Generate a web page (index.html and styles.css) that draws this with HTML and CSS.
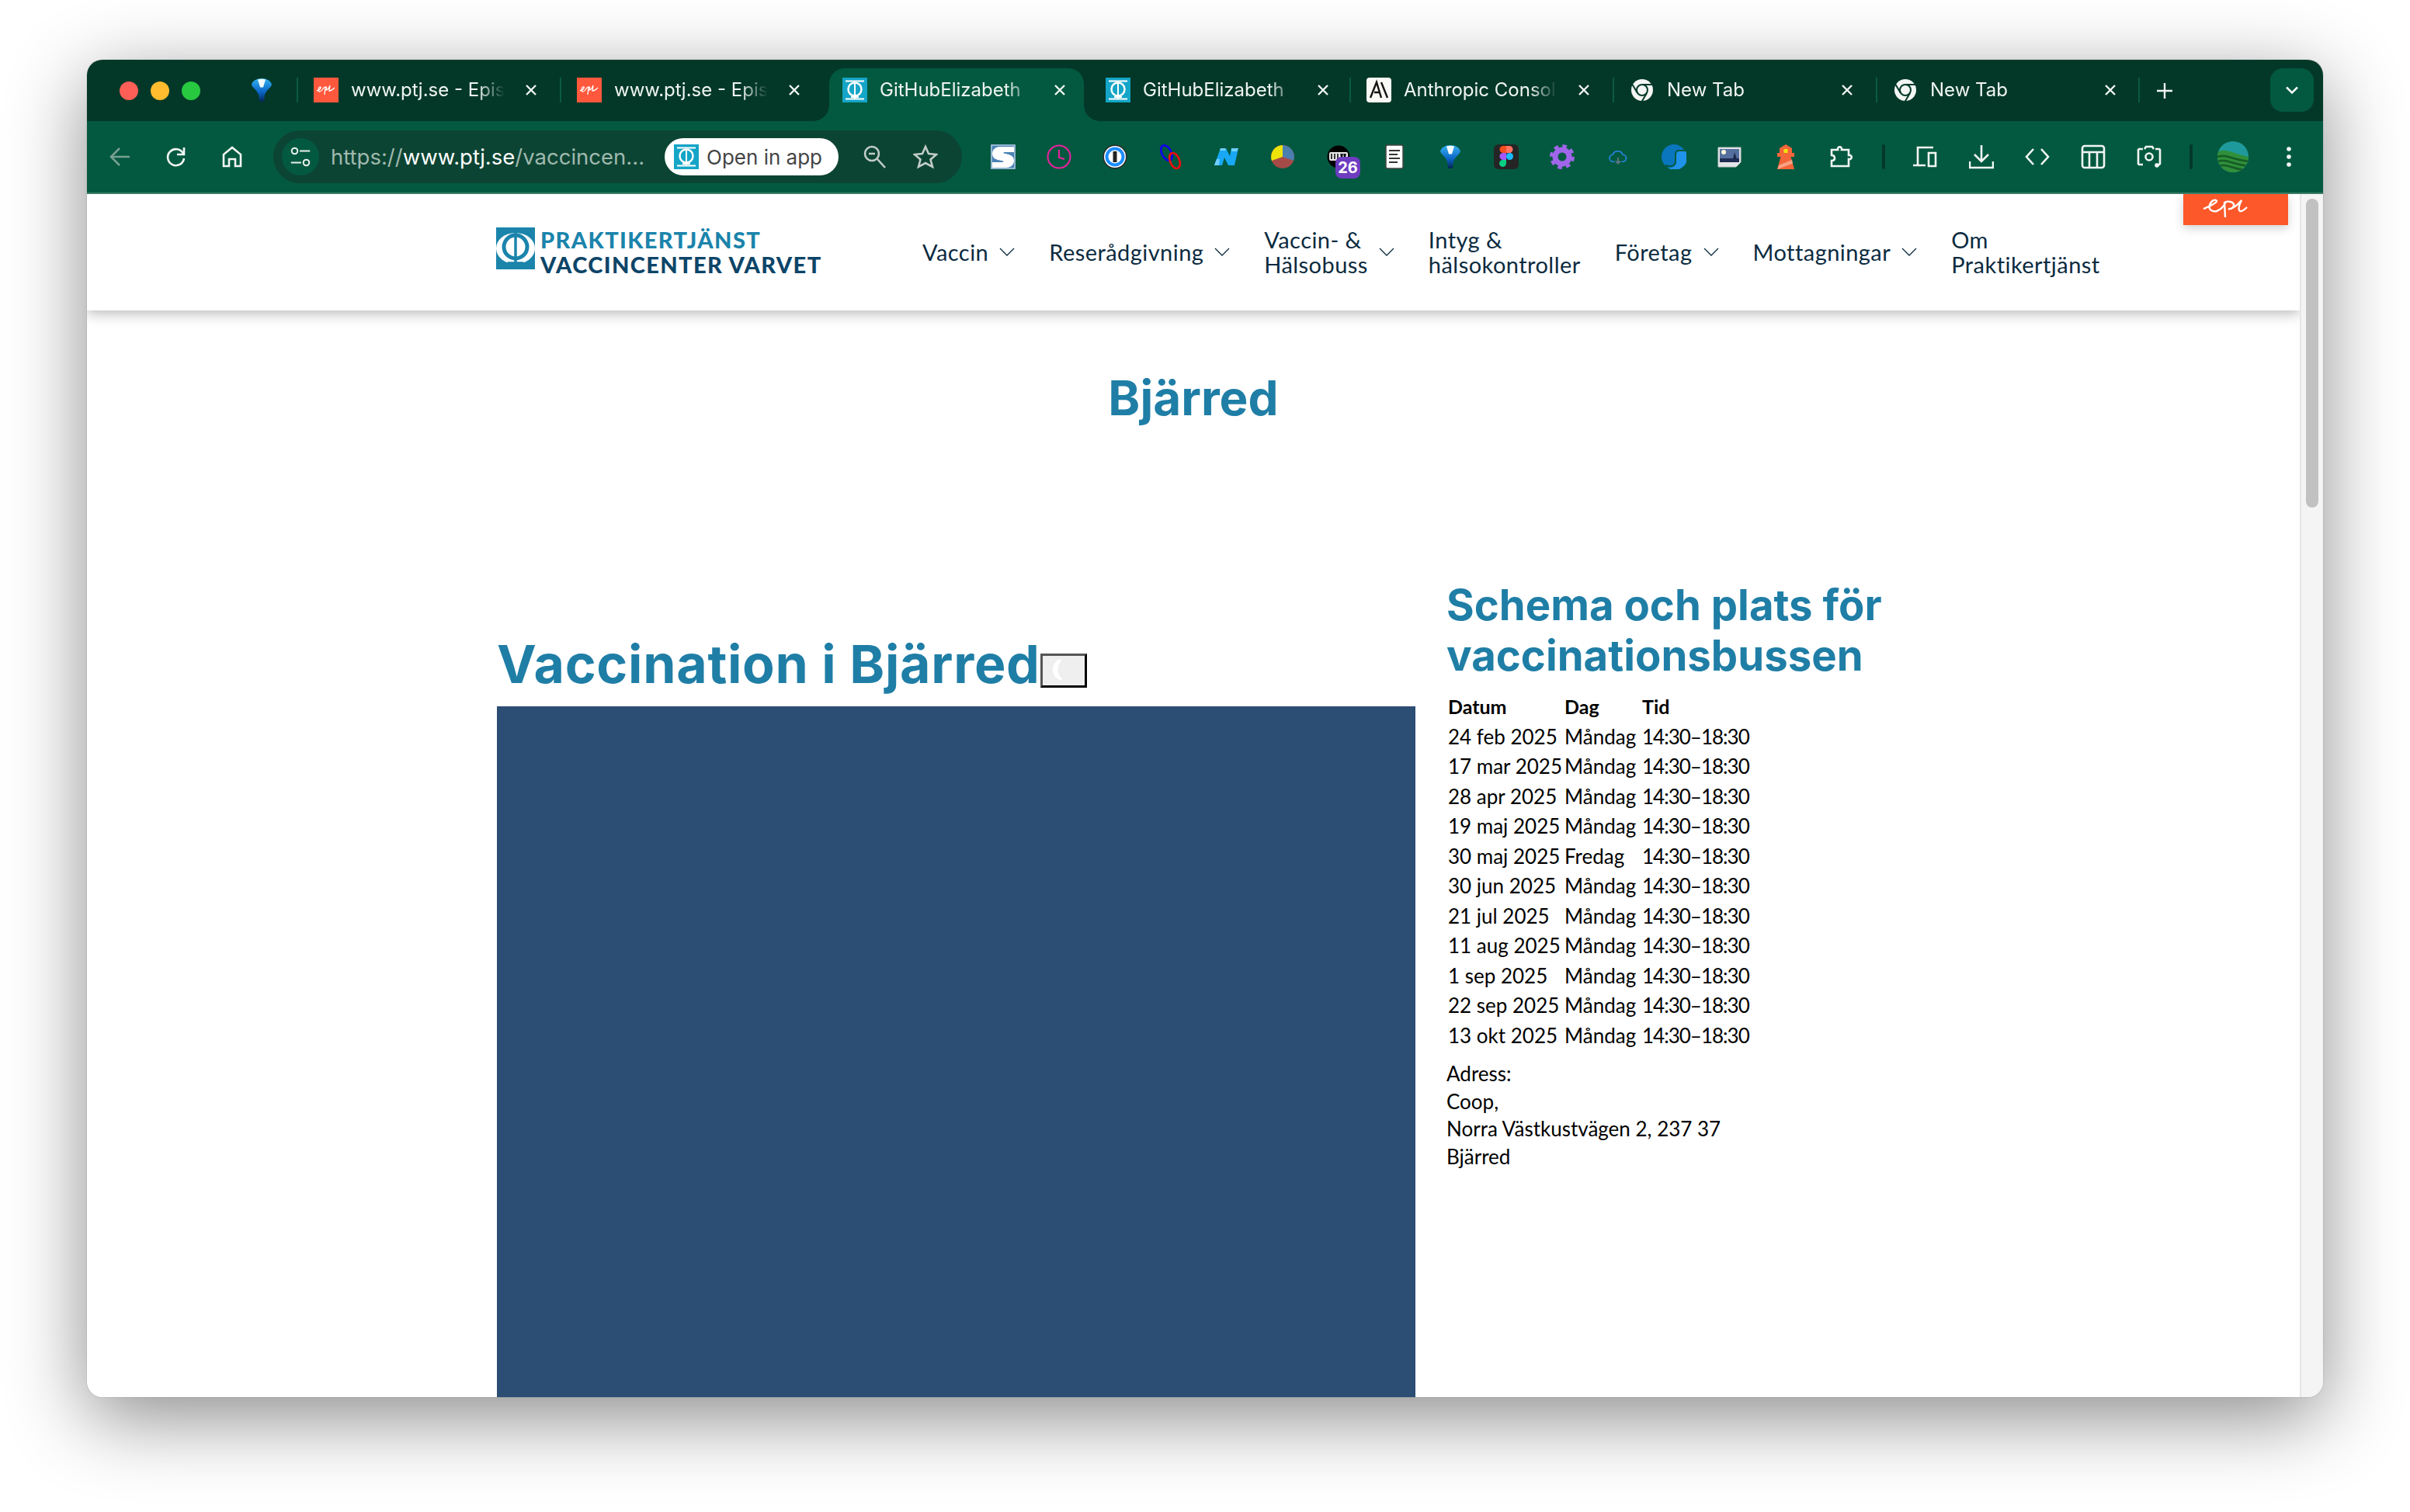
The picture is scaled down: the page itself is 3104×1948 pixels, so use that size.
FILE: index.html
```html
<!DOCTYPE html>
<html lang="sv">
<head>
    <meta charset="UTF-8">
    <title>Bjärred</title>
    <link rel="stylesheet" href="styles.css">
</head>
<body>
    <svg class="defs" width="0" height="0">
        <symbol id="fav-epi" viewBox="0 0 32 32">
            <rect width="32" height="32" fill="#ff583d"/>
            <path d="M4 17c4-1 6-4 5-5-2-1-4 4-2 6 2 1 4-2 6-5l2-1-1 10 1-10c2-1 2 2 1 4 2 0 4-3 5-6l-1 7c2 0 5-2 7-4" fill="none" stroke="#fff" stroke-width="1.3"/>
        </symbol>
        <symbol id="fav-ptj" viewBox="0 0 32 32">
            <rect width="32" height="32" fill="#14a5c7"/>
            <path d="M4 4.500h24M4 27.500h24M16 6v21M11 25h10" stroke="#fff" stroke-width="2" fill="none"/>
            <circle cx="16" cy="15" r="8.500" fill="none" stroke="#fff" stroke-width="2.500"/>
        </symbol>
        <symbol id="fav-chrome" viewBox="0 0 32 32">
            <circle cx="16" cy="16" r="14" fill="#f4f6f4"/>
            <circle cx="16" cy="16" r="7" fill="none" stroke="#033a2a" stroke-width="2"/>
            <path d="M16 9h13M10 20L3.500 9M22 20l-6.500 11" stroke="#033a2a" stroke-width="2" fill="none"/>
        </symbol>
        <symbol id="ic-funnel" viewBox="0 0 32 32">
            <defs>
                <linearGradient id="funnel-grad" x1="0" y1="0" x2="0" y2="1">
                    <stop offset="0" stop-color="#35b4f2"/>
                    <stop offset="0.6" stop-color="#0a62c4"/>
                    <stop offset="1" stop-color="#04264f"/>
                </linearGradient>
            </defs>
            <path d="M3 9C4 4 10 1 16 1s12 3 13 8c-1 4-7 7-9 13l-1 9h-6l-1-9C10 16 4 13 3 9z" fill="url(#funnel-grad)"/>
            <path d="M11 2.500c3-1 7-1 10 0l-3 10h-4z" fill="#f2fbff"/>
        </symbol>
        <symbol id="ic-close" viewBox="0 0 24 24">
            <path d="M6 6l12 12M18 6L6 18" stroke="#f2f6f3" stroke-width="2.400" fill="none"/>
        </symbol>
    </svg>

    <div class="window">
        <div class="tabstrip">
            <div class="lights">
                <span class="light light-red"></span>
                <span class="light light-yellow"></span>
                <span class="light light-green"></span>
            </div>
            <div class="pinned"><svg class="fav"><use href="#ic-funnel"/></svg></div>

            <div class="tab">
                <svg class="fav"><use href="#fav-epi"/></svg>
                <span class="tab-title">www.ptj.se - Epis</span>
                <svg class="tab-close"><use href="#ic-close"/></svg>
            </div>
            <div class="tab">
                <svg class="fav"><use href="#fav-epi"/></svg>
                <span class="tab-title">www.ptj.se - Epis</span>
                <svg class="tab-close"><use href="#ic-close"/></svg>
            </div>
            <div class="tab tab-active">
                <svg class="fav"><use href="#fav-ptj"/></svg>
                <span class="tab-title">GitHubElizabeth</span>
                <svg class="tab-close"><use href="#ic-close"/></svg>
            </div>
            <div class="tab tab-after-active">
                <svg class="fav"><use href="#fav-ptj"/></svg>
                <span class="tab-title">GitHubElizabeth</span>
                <svg class="tab-close"><use href="#ic-close"/></svg>
            </div>
            <div class="tab">
                <svg class="fav" viewBox="0 0 32 32">
                    <rect x="0" width="32" height="32" rx="4" fill="#faf9f5"/>
                    <path d="M5 26L13 6l6 20M10 19h7M19 6l8 20" stroke="#141413" stroke-width="2.400" fill="none"/>
                </svg>
                <span class="tab-title">Anthropic Consol</span>
                <svg class="tab-close"><use href="#ic-close"/></svg>
            </div>
            <div class="tab">
                <svg class="fav"><use href="#fav-chrome"/></svg>
                <span class="tab-title">New Tab</span>
                <svg class="tab-close"><use href="#ic-close"/></svg>
            </div>
            <div class="tab tab-last">
                <svg class="fav"><use href="#fav-chrome"/></svg>
                <span class="tab-title">New Tab</span>
                <svg class="tab-close"><use href="#ic-close"/></svg>
            </div>
            <svg class="new-tab" viewBox="0 0 24 24"><path d="M12 2v20M2 12h20" stroke="#f2f6f3" stroke-width="2.400"/></svg>
            <div class="tab-search">
                <svg viewBox="0 0 24 24" width="28" height="28"><path d="M6 9l6 6 6-6" fill="none" stroke="#f2f6f3" stroke-width="2.200"/></svg>
            </div>
        </div>

        <div class="toolbar">
            <div class="slot">
                <svg class="tool dim" viewBox="0 0 32 32"><path d="M28 16H5M15 5L4 16l11 11" fill="none"/></svg>
            </div>
            <div class="slot">
                <svg class="tool" viewBox="0 0 32 32"><path d="M25 12a10.500 10.500 0 1 0 1 6M26 4v9h-9" fill="none"/></svg>
            </div>
            <div class="slot">
                <svg class="tool" viewBox="0 0 32 32"><path d="M5 28V13L16 4l11 9v15h-7v-9h-8v9z" fill="none"/></svg>
            </div>

            <div class="omnibox">
                <div class="site-info">
                    <svg viewBox="0 0 32 32" width="30" height="30"><g fill="none" stroke="#e9f0ec" stroke-width="2.200"><circle cx="8" cy="8" r="4"/><path d="M15 8h14M3 24h14"/><circle cx="24" cy="24" r="4"/></g></svg>
                </div>
                <div class="url"><span class="url-dim">https://</span>www.ptj.se<span class="url-dim">/vaccincen...</span></div>
                <div class="open-app">
                    <svg class="fav"><use href="#fav-ptj"/></svg>
                    <span>Open in app</span>
                </div>
                <svg class="omni-icon omni-zoom" viewBox="0 0 32 32"><g fill="none" stroke="#c2cdc8" stroke-width="2.600"><circle cx="12" cy="12" r="9"/><path d="M8 12h8M19 19l10 11"/></g></svg>
                <svg class="omni-icon omni-star" viewBox="0 0 32 32"><path d="M16 3l4 9 10 1-7.500 6.500L25 29l-9-5-9 5 2.500-9.500L2 13l10-1z" fill="none" stroke="#c2cdc8" stroke-width="2.600"/></svg>
            </div>

            <div class="extensions">
                <div class="slot"><svg class="ext" viewBox="0 0 32 32">
                    <rect width="32" height="32" fill="#4a83b6"/>
                    <rect x="1" y="1" width="30" height="30" fill="none" stroke="#dfe9f0"/>
                    <path d="M30 3H12C6 3 2 7 2 12c0 6 5 8 12 9 4 .5 3 2 0 2H2v7h18c6 0 10-4 10-9 0-6-5-8-11-9-4-.5-3-2 0-2h11z" fill="#fff"/>
                </svg></div>
                <div class="slot"><svg class="ext" viewBox="0 0 32 32"><circle cx="16" cy="16" r="14.500" fill="none" stroke="#ee1f9f" stroke-width="2"/><path d="M16 7v10l7 2" fill="none" stroke="#ee1f9f" stroke-width="2"/></svg></div>
                <div class="slot"><svg class="ext" viewBox="0 0 32 32"><circle cx="16" cy="16" r="15.500" fill="#2a2a2a"/><circle cx="16" cy="16" r="14" fill="#fff"/><circle cx="16" cy="16" r="12.500" fill="#1a8cff"/><circle cx="16" cy="16" r="8.500" fill="#fff"/><rect x="13.500" y="9" width="5" height="14" fill="#222"/></svg></div>
                <div class="slot"><svg class="ext" viewBox="0 0 32 32"><ellipse cx="10.500" cy="11" rx="6" ry="10.500" transform="rotate(-28 10.500 11)" fill="none" stroke="#1400ef" stroke-width="2.600"/><ellipse cx="21" cy="21" rx="6" ry="10.500" transform="rotate(-22 21 21)" fill="none" stroke="#f00d0d" stroke-width="2.600"/></svg></div>
                <div class="slot"><svg class="ext" viewBox="0 0 32 32"><path d="M0 27L8 5l7 0 5 10 2-10h9l-5 22h-8l-5-10-3 10z" fill="#18a8f5"/><path d="M8 5h6l1 3H7zM22 5h9l-2 4h-7zM0 27l3-8h4l-1 8z" fill="#6fd0ff"/></svg></div>
                <div class="slot"><svg class="ext" viewBox="0 0 32 32"><circle cx="16" cy="16" r="15" fill="#a64a47"/><path d="M16 16L2 21A15 15 0 0 1 16 1z" fill="#ebe30a"/><path d="M16 16V1a15 15 0 0 1 14 20z" fill="#4a7fb0"/></svg></div>
                <div class="slot ext-dev">
                    <svg class="ext" viewBox="0 0 32 32"><circle cx="16" cy="16" r="14.500" fill="#000"/><rect x="4" y="10" width="24" height="11" rx="2" fill="#e8e8e8"/><path d="M7 12v7M11 12v7M15 12v7M19 12l1 7 1-7M23 12l1 7 1-7" stroke="#000" stroke-width="1.500"/></svg>
                    <span class="badge">26</span>
                </div>
                <div class="slot"><svg class="ext" viewBox="0 0 32 32"><rect x="5" y="1" width="22" height="30" rx="2" fill="#fff" stroke="#444" stroke-width="1.500"/><path d="M9 8h14M9 13h11M9 18h14M9 23h11" stroke="#333" stroke-width="2"/></svg></div>
                <div class="slot"><svg class="ext"><use href="#ic-funnel"/></svg></div>
                <div class="slot"><svg class="ext" viewBox="0 0 32 32"><rect width="32" height="32" rx="6" fill="#252525"/><path d="M16 2h-4a4.500 4.500 0 0 0 0 9h4z" fill="#f24e1e"/><path d="M16 2h4a4.500 4.500 0 0 1 0 9h-4z" fill="#ff7262"/><path d="M16 11h-4a4.500 4.500 0 0 0 0 9h4z" fill="#a259ff"/><circle cx="20.500" cy="15.500" r="4.500" fill="#1abcfe"/><path d="M16 20h-4a4.500 4.500 0 1 0 4 4.500z" fill="#0acf83"/></svg></div>
                <div class="slot"><svg class="ext" viewBox="0 0 32 32"><circle cx="16" cy="16" r="9" fill="none" stroke="#a066ea" stroke-width="7"/><circle cx="16" cy="16" r="13" fill="none" stroke="#a066ea" stroke-width="6" stroke-dasharray="5.200 5"/></svg></div>
                <div class="slot"><svg class="ext" viewBox="0 0 32 32"><g transform="translate(4 5) scale(.75)"><path d="M10 23H8a6 6 0 0 1-1-12 9 9 0 0 1 17 0 6 6 0 0 1 0 12h-2" fill="none" stroke="#2a86e8" stroke-width="2.200"/><path d="M16 16v10M12 22l4 4 4-4" fill="none" stroke="#5d7480" stroke-width="2.600"/></g></svg></div>
                <div class="slot"><svg class="ext" viewBox="0 0 32 32"><circle cx="16" cy="16" r="16" fill="#0a76bd"/><path d="M22 8h8.500A16 16 0 0 1 8 30c6 1 10-2 10-8v-8c0-4 1-6 4-6z" fill="#1f92ea"/><path d="M31 8h-9c-3 0-4 2-4 6v8c0 5-4 8-13 5" fill="none" stroke="#03593f" stroke-width="2"/></svg></div>
                <div class="slot"><svg class="ext" viewBox="0 0 32 32"><path d="M1 4h29v19l-6 6H1z" fill="#e4e6e8" stroke="#c9cdd0"/><rect x="3" y="6" width="25" height="17" fill="#55709f"/><rect x="3" y="18" width="25" height="5" fill="#1f2d52"/><circle cx="8" cy="10" r="3" fill="#f8f8dc"/><path d="M20 19l2-9 3 9z" fill="#1a2748"/></svg></div>
                <div class="slot"><svg class="ext" viewBox="0 0 32 32"><path d="M16 0L8 5v6h16V5z" fill="#f4663a"/><rect x="13.500" y="6" width="5" height="5" fill="#f2e20c"/><rect x="5" y="11" width="22" height="5" fill="#f4663a"/><path d="M9.500 16h13L27 32H5z" fill="#f4663a"/><path d="M7 27l17-7 1 4.500L5.500 32z" fill="#f9a184"/></svg></div>
                <div class="slot"><svg class="tool" viewBox="0 0 32 32"><path d="M3 7h8c-1-5 6-5 5 0h9v7c5-1 5 6 0 5v9H3v-7c3 0 4-1 4-3s-1-4-4-4z" fill="none"/></svg></div>
            </div>

            <span class="tool-sep"></span>
            <div class="slot"><svg class="tool" viewBox="0 0 32 32"><path d="M26 4H6v22M0 27h16M20 11h9v17h-9z" fill="none"/></svg></div>
            <div class="slot"><svg class="tool" viewBox="0 0 32 32"><path d="M16 1v20M7 13l9 9 9-9M1 22v8h30v-8" fill="none"/></svg></div>
            <div class="slot"><svg class="tool" viewBox="0 0 32 32"><path d="M11 6L2 16l9 10M21 6l9 10-9 10" fill="none"/></svg></div>
            <div class="slot"><svg class="tool" viewBox="0 0 32 32"><rect x="2" y="2" width="28" height="28" rx="3" fill="none"/><path d="M2 10h28M11 10v20M21 10v20" fill="none"/></svg></div>
            <div class="slot"><svg class="tool" viewBox="0 0 32 32"><path d="M8 6H3l-1 1v18l1 1h5M24 6h5l1 1v18l-1 1h-5M10 6l2-3h8l2 3" fill="none"/><circle cx="16" cy="16" r="4.500" fill="none"/><circle cx="26" cy="27" r="1.500" fill="#f2f6f3"/></svg></div>
            <span class="tool-sep"></span>
            <div class="slot">
                <svg class="avatar" viewBox="0 0 40 40">
                    <defs><clipPath id="avatar-clip"><circle cx="20" cy="20" r="20"/></clipPath></defs>
                    <g clip-path="url(#avatar-clip)">
                        <rect width="40" height="40" fill="#1f9a9c"/>
                        <path d="M0 14c10-6 20 2 40 6v20H0z" fill="#2f8f3a"/>
                        <path d="M0 20c10-4 20 4 40 6M0 26c10-4 20 4 40 6M0 32c10-4 20 4 40 6" fill="none" stroke="#155c25" stroke-width="2.500"/>
                    </g>
                </svg>
            </div>
            <div class="slot">
                <svg class="dots" viewBox="0 0 8 32" width="8" height="32"><circle cx="4" cy="6" r="2.800" fill="#f2f6f3"/><circle cx="4" cy="16" r="2.800" fill="#f2f6f3"/><circle cx="4" cy="26" r="2.800" fill="#f2f6f3"/></svg>
            </div>
        </div>

        <div class="viewport">
            <div class="page">
                <header class="site-header">
                    <a class="logo">
                        <svg class="logo-mark" viewBox="0 0 50 54">
                            <rect width="50" height="54" fill="#1b84ab"/>
                            <ellipse cx="25" cy="27" rx="25" ry="20" fill="#fff"/>
                            <circle cx="25" cy="25" r="15" fill="none" stroke="#1b84ab" stroke-width="5"/>
                            <path d="M25 6v41M15 46h20" stroke="#1b84ab" stroke-width="3.500"/>
                        </svg>
                        <div class="logo-text">
                            <span class="logo-top">PRAKTIKERTJÄNST</span>
                            <span class="logo-bottom">VACCINCENTER VARVET</span>
                        </div>
                    </a>
                    <nav class="main-nav">
                        <a class="nav-item">Vaccin<svg class="chev" viewBox="0 0 20 12"><path d="M1 1l9 9 9-9" fill="none" stroke="#0b2b3f" stroke-width="1.300"/></svg></a>
                        <a class="nav-item">Reserådgivning<svg class="chev" viewBox="0 0 20 12"><path d="M1 1l9 9 9-9" fill="none" stroke="#0b2b3f" stroke-width="1.300"/></svg></a>
                        <a class="nav-item"><span>Vaccin- &amp;<br>Hälsobuss</span><svg class="chev" viewBox="0 0 20 12"><path d="M1 1l9 9 9-9" fill="none" stroke="#0b2b3f" stroke-width="1.300"/></svg></a>
                        <a class="nav-item"><span>Intyg &amp;<br>hälsokontroller</span></a>
                        <a class="nav-item">Företag<svg class="chev" viewBox="0 0 20 12"><path d="M1 1l9 9 9-9" fill="none" stroke="#0b2b3f" stroke-width="1.300"/></svg></a>
                        <a class="nav-item">Mottagningar<svg class="chev" viewBox="0 0 20 12"><path d="M1 1l9 9 9-9" fill="none" stroke="#0b2b3f" stroke-width="1.300"/></svg></a>
                        <a class="nav-item"><span>Om<br>Praktikertjänst</span></a>
                    </nav>
                </header>

                <h1 class="page-title">Bjärred</h1>

                <div class="columns">
                    <section class="col-main">
                        <h2 class="main-title">Vaccination i Bjärred<span class="broken-btn"><svg viewBox="0 0 54 38" width="54" height="38"><path d="M22 4c-11 4-13 22 0 27 4 0 3-2 2-2-6-6-6-17 0-23z" fill="#fff"/></svg></span></h2>
                        <div class="map-box"></div>
                    </section>
                    <aside class="col-side">
                        <h2 class="side-title">Schema och plats för vaccinationsbussen</h2>
                        <table class="schedule">
                            <thead>
                                <tr><th>Datum</th><th>Dag</th><th>Tid</th></tr>
                            </thead>
                            <tbody>
                                <tr><td>24 feb 2025</td><td>Måndag</td><td>14:30–18:30</td></tr>
                                <tr><td>17 mar 2025</td><td>Måndag</td><td>14:30–18:30</td></tr>
                                <tr><td>28 apr 2025</td><td>Måndag</td><td>14:30–18:30</td></tr>
                                <tr><td>19 maj 2025</td><td>Måndag</td><td>14:30–18:30</td></tr>
                                <tr><td>30 maj 2025</td><td>Fredag</td><td>14:30–18:30</td></tr>
                                <tr><td>30 jun 2025</td><td>Måndag</td><td>14:30–18:30</td></tr>
                                <tr><td>21 jul 2025</td><td>Måndag</td><td>14:30–18:30</td></tr>
                                <tr><td>11 aug 2025</td><td>Måndag</td><td>14:30–18:30</td></tr>
                                <tr><td>1 sep 2025</td><td>Måndag</td><td>14:30–18:30</td></tr>
                                <tr><td>22 sep 2025</td><td>Måndag</td><td>14:30–18:30</td></tr>
                                <tr><td>13 okt 2025</td><td>Måndag</td><td>14:30–18:30</td></tr>
                            </tbody>
                        </table>
                        <p class="address">Adress:<br>Coop,<br>Norra Västkustvägen 2, 237 37<br>Bjärred</p>
                    </aside>
                </div>

                <div class="epi-tab">
                    <svg viewBox="0 0 60 30" width="60" height="30"><path d="M1 13C8 10 18 6 18 3 17 0 11 2 9 8 7 14 12 17 18 16 24 14 28 8 30 4M29 24L28 5C30 3 38 3 40 7 41 11 36 14 33 13 38 14 44 9 50 2 47 8 45 14 48 16 51 17 54 14 57 11" fill="none" stroke="#fff" stroke-width="2.400"/></svg>
                </div>
            </div>
            <div class="scrollbar"><div class="thumb"></div></div>
        </div>
    </div>
</body>
</html>
```

FILE: styles.css
```css
html, body {
    margin: 0;
    height: 100%;
    background: #fff;
    overflow: hidden;
}
body {
    padding: 77px 112px 0;
    box-sizing: border-box;
    height: 1948px;
    font-family: "Lato", "Liberation Sans", sans-serif;
}
.defs {
    position: absolute;
}
.window {
    width: 2880px;
    height: 1723px;
    border-radius: 20px;
    box-shadow: 0 26px 100px rgba(0, 0, 0, 0.46), 0 0 1px rgba(0, 0, 0, 0.6);
    display: flex;
    flex-direction: column;
}

/* tab strip */
.tabstrip {
    display: flex;
    align-items: flex-end;
    height: 79px;
    background: #033828;
    border-radius: 20px 20px 0 0;
    font-family: "Inter", sans-serif;
    font-size: 24px;
    color: #f0f5f2;
    flex: none;
}
.lights {
    display: flex;
    gap: 16px;
    align-self: flex-start;
    margin: 28px 0 0 42px;
}
.light {
    width: 24px;
    height: 24px;
    border-radius: 50%;
}
.light-red { background: #ff5f57; }
.light-yellow { background: #febc2e; }
.light-green { background: #28c840; }
.pinned {
    width: 32px;
    height: 32px;
    margin: 0 0 24px 63px;
    padding-right: 29px;
}
.fav {
    width: 32px;
    height: 32px;
    flex: none;
    display: block;
}
.tab {
    position: relative;
    width: 339px;
    height: 68px;
    box-sizing: border-box;
    padding: 0 25px 13px 22px;
    display: flex;
    align-items: center;
    gap: 16px;
    flex: none;
}
.tab::before {
    content: "";
    position: absolute;
    left: 0;
    top: 12px;
    width: 2px;
    height: 32px;
    background: #0a5a41;
}
.tab-title {
    width: 198px;
    white-space: nowrap;
    overflow: hidden;
    flex: none;
    -webkit-mask-image: linear-gradient(to right, #000 82%, transparent 100%);
    mask-image: linear-gradient(to right, #000 82%, transparent 100%);
}
.tab-close {
    width: 24px;
    height: 24px;
    flex: none;
    margin-left: 6px;
}
.tab-active {
    padding-left: 25px;
}
.tab-active::before {
    left: 8px;
    top: 0;
    width: 328px;
    height: 68px;
    background: #03593f;
    border-radius: 20px 20px 0 0;
}
.tab-active::after {
    content: "";
    position: absolute;
    left: -12px;
    bottom: 0;
    width: 368px;
    height: 20px;
    background:
        radial-gradient(circle at 0 0, transparent 19.500px, #03593f 20px) left bottom / 20px 20px no-repeat,
        radial-gradient(circle at 100% 0, transparent 19.500px, #03593f 20px) right bottom / 20px 20px no-repeat;
}
.tab-active > * {
    position: relative;
    z-index: 1;
}
.tab-after-active {
    padding-left: 25px;
}
.tab-after-active::before {
    display: none;
}
.tab-last::after {
    content: "";
    position: absolute;
    right: -1px;
    top: 12px;
    width: 2px;
    height: 32px;
    background: #0a5a41;
}
.new-tab {
    width: 24px;
    height: 24px;
    flex: none;
    margin: 0 0 27px 21px;
}
.tab-search {
    width: 56px;
    height: 56px;
    margin: 0 0 12px 124px;
    border-radius: 16px;
    background: #03593f;
    display: flex;
    align-items: center;
    justify-content: center;
    flex: none;
}

/* toolbar */
.toolbar {
    display: flex;
    align-items: center;
    height: 92px;
    padding-left: 7px;
    background: #03593f;
    border-bottom: 2px solid #3c7c66;
    box-sizing: content-box;
    flex: none;
}
.slot {
    position: relative;
    width: 72px;
    height: 48px;
    display: flex;
    align-items: center;
    justify-content: center;
    flex: none;
}
.tool {
    width: 32px;
    height: 32px;
    stroke: #f2f6f3;
    stroke-width: 2.600;
}
.tool.dim {
    stroke: #78a091;
}
.ext {
    width: 32px;
    height: 32px;
}
.tool-sep {
    width: 4px;
    height: 32px;
    margin: 0 16px;
    border-radius: 2px;
    background: #033828;
    flex: none;
}
.badge {
    position: absolute;
    left: 32px;
    top: 24px;
    width: 32px;
    height: 28px;
    border-radius: 8px;
    background: #6e3cc0;
    color: #fff;
    font-family: "Inter", sans-serif;
    font-size: 20px;
    font-weight: 700;
    line-height: 28px;
    text-align: center;
}
.omnibox {
    width: 887px;
    height: 68px;
    margin: 0 17px 0 17px;
    border-radius: 34px;
    background: #0c4433;
    position: relative;
    display: flex;
    align-items: center;
    box-sizing: border-box;
    padding-left: 11px;
    flex: none;
    font-family: "Inter", sans-serif;
}
.site-info {
    width: 48px;
    height: 48px;
    border-radius: 50%;
    background: #03593f;
    display: flex;
    align-items: center;
    justify-content: center;
    flex: none;
}
.url {
    margin-left: 15px;
    width: 420px;
    font-size: 27.500px;
    color: #fff;
    white-space: nowrap;
    flex: none;
}
.url-dim {
    color: #9fb9ae;
}
.open-app {
    height: 48px;
    width: 224px;
    margin-left: 10px;
    border-radius: 24px;
    background: #fff;
    color: #444;
    font-size: 26px;
    display: flex;
    align-items: center;
    gap: 10px;
    box-sizing: border-box;
    padding-left: 12px;
    flex: none;
}
.omni-icon {
    width: 32px;
    height: 32px;
    flex: none;
}
.omni-zoom {
    margin-left: 31px;
}
.omni-star {
    margin-left: 33px;
}
.extensions {
    display: flex;
    flex: none;
    margin-left: 0;
}
.avatar {
    width: 40px;
    height: 40px;
}

/* page */
.viewport {
    flex: 1;
    min-height: 0;
    display: flex;
    overflow: hidden;
    border-radius: 0 0 20px 20px;
    background: #fff;
}
.page {
    position: relative;
    width: 2850px;
    flex: none;
    color: #0b2b3f;
    overflow: hidden;
}
.site-header {
    height: 150px;
    padding-left: 527px;
    box-sizing: border-box;
    display: flex;
    align-items: center;
    background: #fff;
    box-shadow: 0 4px 16px rgba(0, 0, 0, 0.28);
    position: relative;
}
.logo {
    width: 417px;
    display: flex;
    gap: 7px;
    flex: none;
}
.logo-mark {
    width: 50px;
    height: 54px;
    flex: none;
}
.logo-text {
    display: flex;
    flex-direction: column;
    font-weight: 900;
    font-size: 29px;
    line-height: 32px;
    letter-spacing: 1.400px;
    white-space: nowrap;
}
.logo-top {
    color: #1b84ab;
}
.logo-bottom {
    color: #0d4568;
}
.main-nav {
    margin-left: 132px;
    display: flex;
    align-items: center;
    gap: 44px;
    font-size: 29px;
    letter-spacing: 0.450px;
    line-height: 32px;
}
.nav-item {
    display: flex;
    align-items: center;
    gap: 14px;
    white-space: nowrap;
}
.chev {
    width: 20px;
    height: 12px;
}
.page-title {
    margin: 73px 0 0;
    text-align: center;
    color: #1f7ea6;
    font-family: "Inter", sans-serif;
    font-size: 62px;
    font-weight: 700;
    line-height: 80px;
}
.columns {
    display: flex;
    padding-left: 528px;
    gap: 40px;
    margin-top: 254px;
}
.col-main {
    width: 1183px;
    flex: none;
    padding-top: 2px;
}
.main-title {
    margin: 0;
    color: #1f7ea6;
    font-family: "Inter", sans-serif;
    font-size: 68px;
    font-weight: 700;
    letter-spacing: 0.700px;
    line-height: 92px;
    display: flex;
    align-items: flex-end;
    white-space: nowrap;
}
.broken-btn {
    width: 60px;
    height: 44px;
    margin: 0 0 15px 0;
    box-sizing: border-box;
    border: 3px solid;
    border-color: #555 #000 #000 #555;
    background: #efefef;
    display: block;
    flex: none;
}
.broken-btn svg {
    display: block;
}
.map-box {
    height: 1200px;
    margin-top: 9px;
    background: #2c4d74;
}
.col-side {
    width: 600px;
    flex: none;
    margin-top: -60px;
    color: #000;
}
.side-title {
    margin: 0;
    color: #1f7ea6;
    font-family: "Inter", sans-serif;
    font-size: 54.500px;
    font-weight: 700;
    line-height: 65px;
}
.schedule {
    margin-top: 14px;
    border-collapse: collapse;
    table-layout: fixed;
    width: 392px;
    font-size: 26px;
    line-height: 32px;
}
.schedule th,
.schedule td {
    padding: 0 0 0 2px;
    height: 38.500px;
    text-align: left;
    white-space: nowrap;
    overflow: visible;
}
.schedule td:last-child {
    letter-spacing: -1px;
}
.schedule th {
    font-weight: 700;
    font-size: 25px;
}
.schedule th:nth-child(1) { width: 148px; }
.schedule th:nth-child(2) { width: 98px; }
.address {
    margin: 13px 0 0;
    font-size: 26px;
    line-height: 35.600px;
}
.epi-tab {
    position: absolute;
    right: 15px;
    top: 0;
    width: 135px;
    height: 40px;
    background: #fc582a;
    box-shadow: 0 4px 12px rgba(0, 0, 0, 0.18);
    box-sizing: border-box;
    padding: 6px 0 0 25px;
}
.scrollbar {
    flex: 1;
    background: #f4f4f4;
    border-left: 2px solid #e6e6e6;
    box-sizing: border-box;
    padding: 6px 6px 0 6px;
}
.thumb {
    width: 16px;
    height: 398px;
    border-radius: 8px;
    background: #c1c1c1;
}
```
